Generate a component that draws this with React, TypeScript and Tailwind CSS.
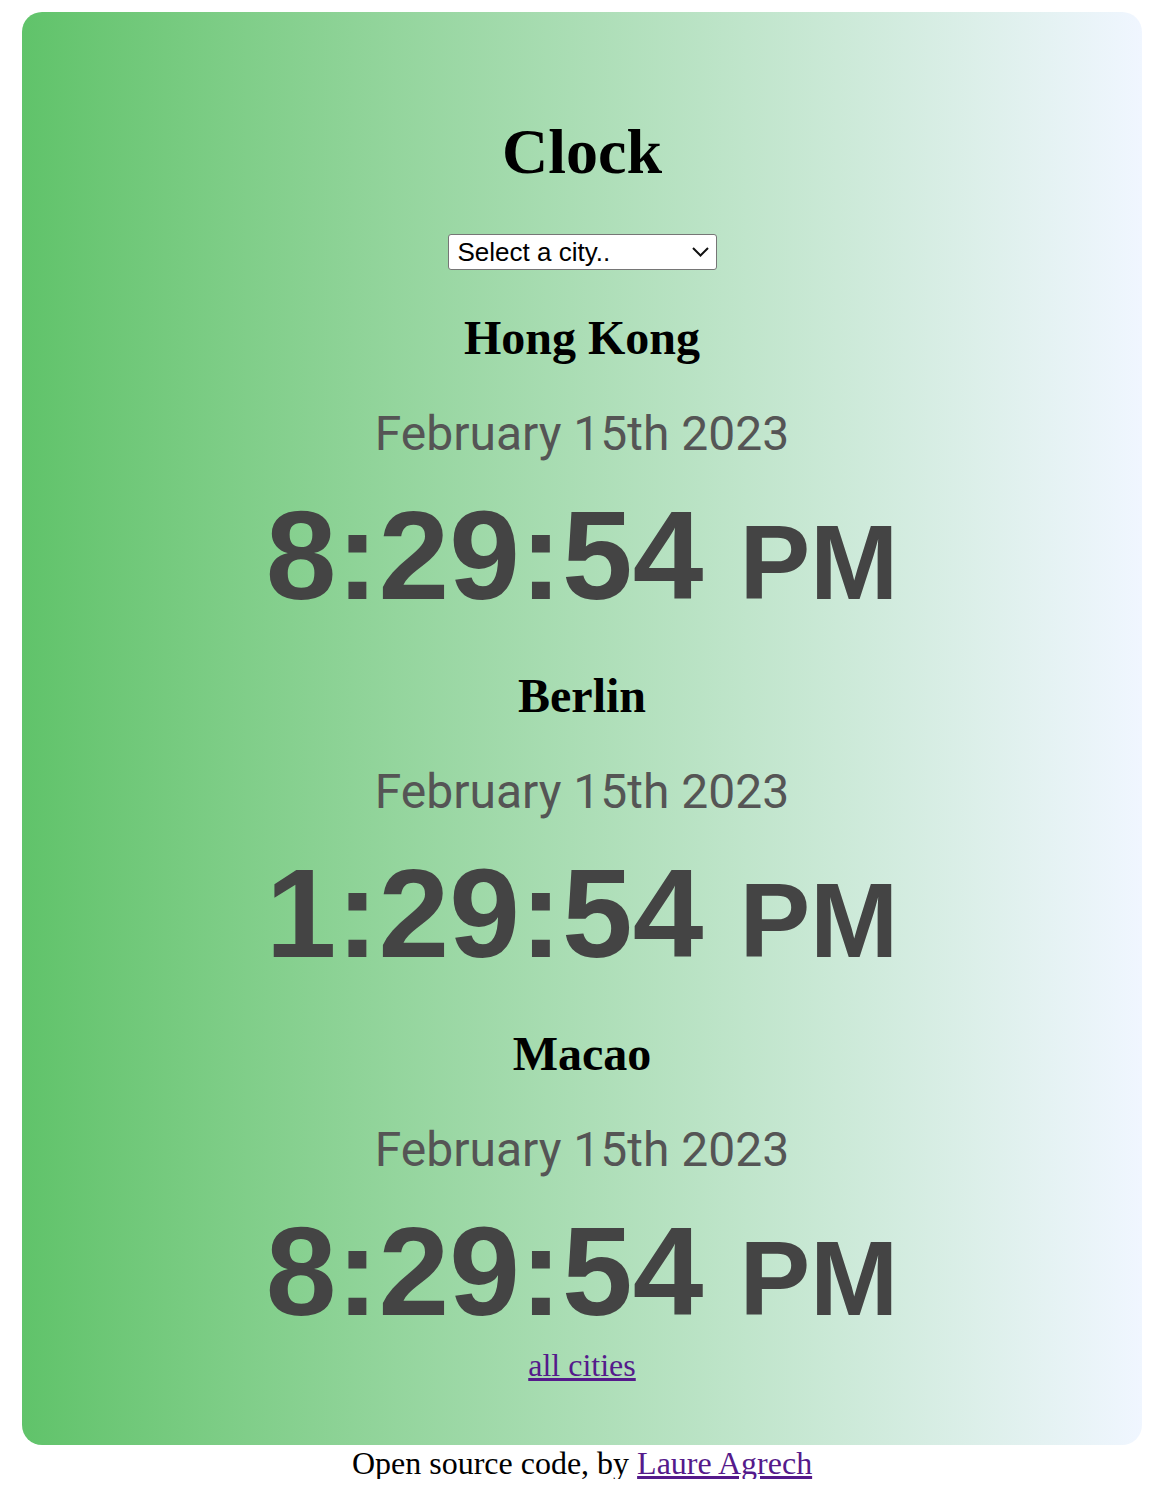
const cities = [
    { name: "Hong Kong", date: "February 15th 2023", time: "8:29:54", ampm: "PM" },
    { name: "Berlin", date: "February 15th 2023", time: "1:29:54", ampm: "PM" },
    { name: "Macao", date: "February 15th 2023", time: "8:29:54", ampm: "PM" },
]

const App = () => {
    return (
        <main className="bg-white pl-[22px] pr-[20px] pt-[12px] text-center font-['Liberation_Serif',serif]">
            <div className="rounded-[20px] bg-gradient-to-r from-[#60c36a] to-[#f0f6ff] pt-[108px] pb-[64px]">
                <h1 className="text-[64px] leading-[64px] font-bold text-black">Clock</h1>

                <div className="mt-[50px] flex justify-center">
                    <div className="relative w-[269px]">
                        <select
                            defaultValue=""
                            className="appearance-none w-full h-[36px] rounded-[3px] border border-[#767676] bg-white pl-[9px] pr-8 text-[26px] leading-[34px] text-black font-['Liberation_Sans',sans-serif] outline-0"
                        >
                            <option value="">Select a city..</option>
                            <option value="sydney">Sydney</option>
                            <option value="tokyo">Tokyo</option>
                            <option value="paris">Paris</option>
                        </select>
                        <svg
                            className="pointer-events-none absolute right-[8px] top-[13px]"
                            width="17"
                            height="10"
                            viewBox="0 0 17 10"
                            fill="none"
                            stroke="#111"
                            strokeWidth="2"
                        >
                            <path d="M1 1l7.5 7.5L16 1" />
                        </svg>
                    </div>
                </div>

                <section className="mt-[44px] flex flex-col">
                    {cities.map((city) => (
                        <div key={city.name} className="flex flex-col pb-[44px] last:pb-0">
                            <h2 className="text-[48px] leading-[48px] font-bold text-black">{city.name}</h2>
                            <p className="mt-[48px] text-[48px] leading-[48px] text-[#555] font-['Roboto',sans-serif]">
                                {city.date}
                            </p>
                            <div className="mt-[32px] flex items-baseline justify-center leading-[131px] text-[#444] font-bold font-['Liberation_Sans',sans-serif]">
                                <span className="text-[127px]">{city.time}</span>
                                <span className="ml-[36px] text-[106px]">{city.ampm}</span>
                            </div>
                        </div>
                    ))}
                </section>

                <a href="#" className="mt-[5px] block text-[32px] leading-[32px] text-[#551a8b] underline">
                    all cities
                </a>
            </div>
            <footer className="mt-[2px] text-[32px] leading-[32px] text-black">
                Open source code, by{" "}
                <a href="#" className="text-[#551a8b] underline">
                    Laure Agrech
                </a>
            </footer>
        </main>
    )
}

export default App
